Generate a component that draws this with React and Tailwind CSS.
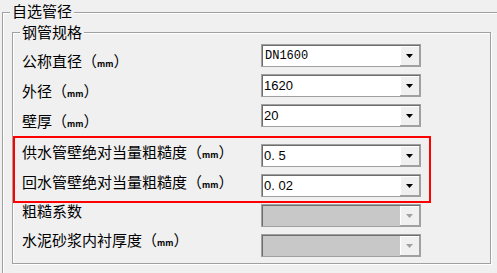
import React from 'react'

const rows = [
    { label: '公称直径', unit: true, value: 'DN1600', mono: true, lt: 'mt-[7px]' },
    { label: '外径', unit: true, value: '1620', lt: 'mt-[7px]' },
    { label: '壁厚', unit: true, value: '20', lt: 'mt-[7px]' },
]

function Arrow({ disabled }) {
    return (
        <svg width="7" height="4" viewBox="0 0 7 4">
            <polygon points="0,0 7,0 3.5,4" fill={disabled ? '#a0a0a0' : '#000'} />
        </svg>
    )
}

function Combo({ value, mono, disabled }) {
    return (
        <div className="w-[160px] h-[23px] flex border border-[#a0a0a0]">
            <div className="flex flex-1 border-t border-l border-[#6e6e6e]">
                <div
                    className={`flex-1 flex items-center ${disabled ? 'bg-[#c8c8c8]' : 'bg-white'} ${mono
                        ? "pl-[2px] font-['Liberation_Mono',monospace] text-[12px]"
                        : "pl-[1px] font-['Liberation_Sans',Arial,sans-serif] text-[13px]"
                        } leading-[20px] text-black`}
                >
                    {value}
                </div>
                <div className="w-[20px] flex items-center justify-center bg-[#f0f0f0] border-r border-b border-[#a0a0a0] shadow-[inset_1px_1px_0_#ffffff]">
                    <Arrow disabled={disabled} />
                </div>
            </div>
        </div>
    )
}

function Label({ text, unit, lt }) {
    return (
        <div className={`w-[239px] text-[15px] leading-[20px] ${lt}`}>
            {text}
            {unit && (
                <>
                    （<span className="text-[8.5px] font-semibold">mm</span>）
                </>
            )}
        </div>
    )
}

function Row({ label, unit, value, mono, disabled, lt, h = 'h-[30px]', pad = 'pl-[9px]' }) {
    return (
        <div className={`flex items-start ${h} ${pad}`}>
            <Label text={label} unit={unit} lt={lt} />
            <Combo value={value} mono={mono} disabled={disabled} />
        </div>
    )
}

export default function App() {
    return (
        <div className="w-[497px] h-[273px] overflow-hidden bg-[#f0f0f0] text-black font-['Noto_Sans_CJK_SC',sans-serif]">
            <fieldset className="ml-[2px] w-[520px] h-[300px] border border-[#a0a0a0] shadow-[inset_1px_1px_0_#ffffff,1px_1px_0_#ffffff]">
                <legend className="ml-[7px] px-[2px] pb-[2px] text-[15px] leading-[22px] bg-[#f0f0f0]">自选管径</legend>

                <fieldset className="ml-[9px] w-[479px] h-[240px] border border-[#a0a0a0] shadow-[inset_1px_1px_0_#ffffff,1px_1px_0_#ffffff]">
                    <legend className="ml-[7px] px-[2px] text-[15px] leading-[16px] bg-[#f0f0f0]">钢管规格</legend>

                    <div className="pt-[4px]">
                        {rows.map(r => (
                            <Row key={r.label} {...r} />
                        ))}

                        <div className="mt-[2px] w-[418px] border-2 border-[#ff0000] pt-[6px] pl-[7px]">
                            <Row label="供水管壁绝对当量粗糙度" unit value="0. 5" lt="mt-[-2px]" pad="" />
                            <Row label="回水管壁绝对当量粗糙度" unit value="0. 02" lt="mt-[-2px]" pad="" h="h-[27px]" />
                        </div>

                        <div className="mt-[1px]">
                            <Row label="粗糙系数" value="" disabled lt="mt-[-3px]" />
                            <Row label="水泥砂浆内衬厚度" unit value="" disabled lt="mt-[-4px]" h="h-[24px]" />
                        </div>
                    </div>
                </fieldset>
            </fieldset>
        </div>
    )
}
